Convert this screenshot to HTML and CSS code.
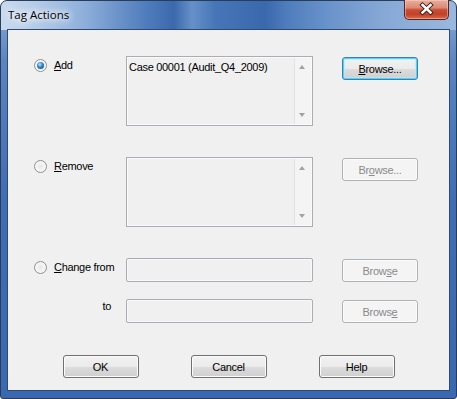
FILE: index.html
```html
<!DOCTYPE html>
<html>
<head>
<meta charset="utf-8">
<link rel="stylesheet" href="styles.css">
</head>
<body>
<div class="window">
  <div class="titlebar">
    <span class="title">Tag Actions</span>
    <div class="close">
      <svg width="45" height="20" viewBox="0 0 45 20">
        <path d="M18.5 6 L26.5 13.5 M26.5 6 L18.5 13.5" stroke="#3a1a14" stroke-width="4.4" stroke-linecap="square" fill="none"/>
        <path d="M18.5 6 L26.5 13.5 M26.5 6 L18.5 13.5" stroke="#ffffff" stroke-width="2.5" stroke-linecap="square" fill="none"/>
      </svg>
    </div>
  </div>
  <div class="client">
    <div class="row row1">
      <label class="opt"><span class="radio checked"></span><span><u>A</u>dd</span></label>
      <div class="list"><div class="list-body">Case 00001 (Audit_Q4_2009)</div><div class="sbar"><span class="arr up"></span><span class="arr down"></span></div></div>
      <div></div>
      <button class="btn default"><u>B</u>rowse...</button>
    </div>
    <div class="row row2">
      <label class="opt"><span class="radio"></span><span><u>R</u>emove</span></label>
      <div class="list"><div class="list-body"></div><div class="sbar"><span class="arr up"></span><span class="arr down"></span></div></div>
      <div></div>
      <button class="btn disabled">Br<u>o</u>wse...</button>
    </div>
    <div class="row row3">
      <label class="opt"><span class="radio"></span><span><u>C</u>hange from</span></label>
      <div class="field"></div>
      <div></div>
      <button class="btn disabled">Brow<u>s</u>e</button>
    </div>
    <div class="row row4">
      <span class="to">to</span>
      <div class="field"></div>
      <div></div>
      <button class="btn disabled">Brows<u>e</u></button>
    </div>
    <div class="actions">
      <button class="btn">OK</button>
      <button class="btn">Cancel</button>
      <button class="btn">Help</button>
    </div>
  </div>
</div>
</body>
</html>
```
FILE: styles.css
```css
* { box-sizing: border-box; }
html, body { margin: 0; padding: 0; background: #ffffff; }
body { width: 457px; height: 399px; overflow: hidden; }

.window {
  position: relative;
  width: 457px;
  height: 399px;
  border: 1px solid #2a3c58;
  border-radius: 7px 7px 3px 3px;
  padding: 0 6px 7px 6px;
  background:
    linear-gradient(to right, #c9daef 0%, #b4cbe8 8%, #8fb0db 18%, #4f7cbc 32%, #3c69ad 38%, #6690c9 42%, #4776b8 47%, #3a68ad 58%, #4f7dbd 63%, #6a93cb 72%, #86a8d6 84%, #9ab8df 100%) top left / 100% 29px no-repeat,
    linear-gradient(to bottom, #8eacd8 0px, #5a84c2 60px, #3f6db4 200px, #3b69b1 100%);
  font-family: "Liberation Sans", Arial, sans-serif;
  font-size: 11px;
  letter-spacing: -0.3px;
  color: #000;
}

.titlebar {
  height: 28px;
  display: flex;
  align-items: center;
  padding-left: 1px;
}
.title {
  font-family: "Open Sans", "Noto Sans", sans-serif;
  font-size: 11.5px;
  letter-spacing: 0;
  color: #000;
  margin-top: -1px;
  text-shadow: 0 0 6px #fff, 0 0 8px #fff, 0 0 10px #fff;
}

.close {
  position: absolute;
  top: -1px;
  right: 7px;
  width: 45px;
  height: 20px;
  border: 1px solid #5c2419;
  border-top: none;
  border-radius: 0 0 5px 5px;
  background: linear-gradient(to bottom, #e8ae9f 0%, #dc8a76 40%, #c94e33 52%, #c3402a 75%, #d86c4e 100%);
  box-shadow: inset 0 0 0 1px rgba(255,220,210,0.45);
  overflow: hidden;
}
.close svg { display: block; margin: -1px 0 0 -1px; }

.client {
  height: 362px;
  border: 1px solid #2f4a72;
  background: #f0f0f0;
  padding: 26px 0 0 26px;
  display: flex;
  flex-direction: column;
}

.row {
  display: grid;
  grid-template-columns: 92px 187px 29px 76px;
  align-items: start;
}
.row1 { height: 70px; }
.row2 { height: 70px; margin-top: 31px; }
.row3 { height: 19px; margin-top: 31px; }
.row4 { height: 20px; margin-top: 22px; }

.opt {
  display: flex;
  align-items: center;
  gap: 7px;
  margin-top: 3px;
  line-height: 13px;
}

.radio {
  width: 13px;
  height: 13px;
  border-radius: 50%;
  border: 1px solid #8d8f91;
  background: radial-gradient(circle at 50% 50%, #e6e6e6 0, #f4f4f4 45%, #d6d6d6 100%);
  box-shadow: inset 0 0 0 1px #fbfbfb;
  flex: none;
  position: relative;
}
.radio.checked::after {
  content: "";
  position: absolute;
  left: 2px; top: 2px;
  width: 7px; height: 7px;
  border-radius: 50%;
  background: radial-gradient(circle at 40% 35%, #b8e6ff 0, #3a8fd0 40%, #145a99 75%, #0c3d70 100%);
}

.list {
  height: 70px;
  border: 1px solid #abadb3;
  background: #f0f0f0;
  display: flex;
  box-shadow: inset 0 0 0 1px #fafafa;
}
.list-body {
  flex: 1;
  padding: 4px 0 0 2px;
  line-height: 13px;
}
.sbar {
  width: 17px;
  border-left: 1px solid #e2e2e2;
  background: #f4f4f4;
  position: relative;
  margin: 1px 1px 1px 0;
}
.arr {
  position: absolute;
  left: 4px;
  width: 0; height: 0;
  border-left: 3.5px solid transparent;
  border-right: 3.5px solid transparent;
}
.arr.up { top: 7px; border-bottom: 4px solid #a2a2a2; }
.arr.down { bottom: 7px; border-top: 4px solid #a2a2a2; }

.field {
  height: 100%;
  border: 1px solid #abadb3;
  border-radius: 2px;
  background: #f0f0f0;
  box-shadow: inset 0 0 0 1px #f8f8f8;
}

.to {
  justify-self: end;
  margin-right: 15px;
  margin-top: 1px;
  line-height: 13px;
}

.btn {
  width: 76px;
  height: 23px;
  margin-top: 1px;
  padding: 0;
  font-family: "Liberation Sans", Arial, sans-serif;
  font-size: 11px;
  letter-spacing: -0.3px;
  color: #000;
  border: 1px solid #707070;
  border-radius: 3px;
  background: linear-gradient(to bottom, #f2f2f2 0%, #ebebeb 50%, #dddddd 51%, #cfcfcf 100%);
  box-shadow: inset 0 0 0 1px #fcfcfc;
  line-height: 20px;
}
.btn.default {
  border-color: #3c7fb1;
  box-shadow: inset 0 0 0 1px #48d6fb, inset 0 0 0 2px rgba(180,235,252,0.6);
}
.btn.disabled {
  color: #8a8a8a;
  border-color: #adb2b5;
  background: #f4f4f4;
  box-shadow: inset 0 0 0 1px #fbfbfb;
}

.actions {
  display: flex;
  justify-content: center;
  gap: 52px;
  margin-top: 36px;
  padding-right: 26px;
}
.actions .btn { margin-top: 0; }
```
